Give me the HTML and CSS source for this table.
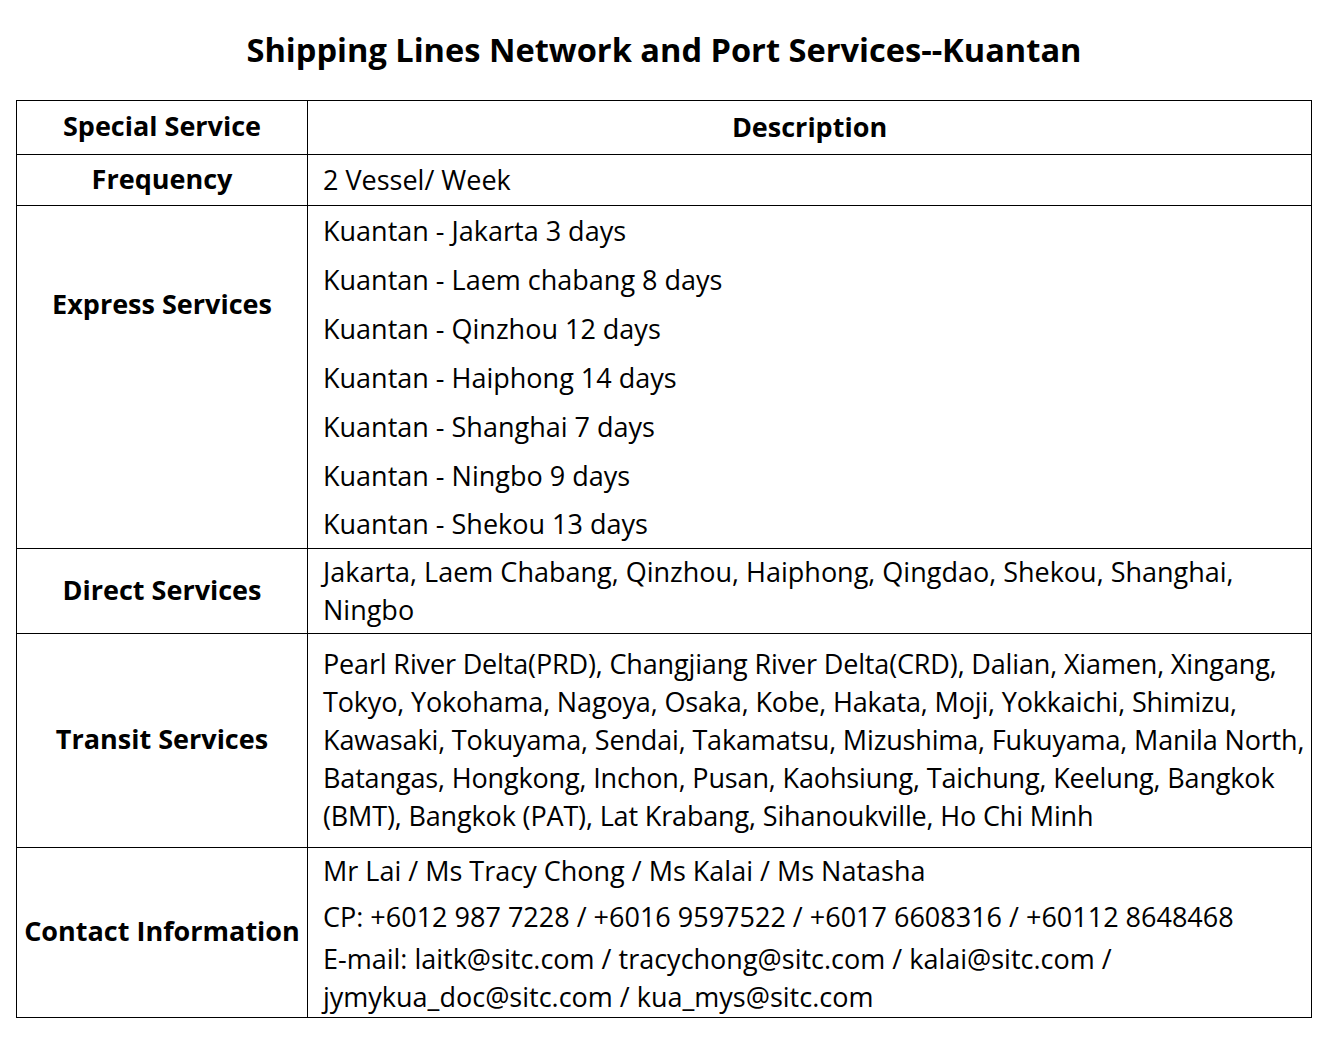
FILE: index.html
```html
<!DOCTYPE html>
<html>
<head>
<meta charset="utf-8">
<link rel="stylesheet" href="styles.css">
</head>
<body>
<h1 class="title">Shipping Lines Network and Port Services--Kuantan</h1>
<table class="grid">
  <tr class="row-head">
    <th class="label">Special Service</th>
    <th class="desc-head">Description</th>
  </tr>
  <tr class="row-freq">
    <th class="label">Frequency</th>
    <td class="desc">2 Vessel/ Week</td>
  </tr>
  <tr class="row-express">
    <th class="label label-express">Express Services</th>
    <td class="desc">
      <p class="line49">Kuantan - Jakarta 3 days</p>
      <p class="line49">Kuantan - Laem chabang 8 days</p>
      <p class="line49">Kuantan - Qinzhou 12 days</p>
      <p class="line49">Kuantan - Haiphong 14 days</p>
      <p class="line49">Kuantan - Shanghai 7 days</p>
      <p class="line49">Kuantan - Ningbo 9 days</p>
      <p class="line49">Kuantan - Shekou 13 days</p>
    </td>
  </tr>
  <tr class="row-direct">
    <th class="label">Direct Services</th>
    <td class="desc para">Jakarta, Laem Chabang, Qinzhou, Haiphong, Qingdao, Shekou, Shanghai, Ningbo</td>
  </tr>
  <tr class="row-transit">
    <th class="label">Transit Services</th>
    <td class="desc para">Pearl River Delta(PRD), Changjiang River Delta(CRD), Dalian, Xiamen, Xingang, Tokyo, Yokohama, Nagoya, Osaka, Kobe, Hakata, Moji, Yokkaichi, Shimizu, Kawasaki, Tokuyama, Sendai, Takamatsu, Mizushima, Fukuyama, Manila North, Batangas, Hongkong, Inchon, Pusan, Kaohsiung, Taichung, Keelung, Bangkok (BMT), Bangkok (PAT), Lat Krabang, Sihanoukville, Ho Chi Minh</td>
  </tr>
  <tr class="row-contact">
    <th class="label">Contact Information</th>
    <td class="desc">
      <p class="line46">Mr Lai / Ms Tracy Chong / Ms Kalai / Ms Natasha</p>
      <p class="line46">CP: +6012 987 7228 / +6016 9597522 / +6017 6608316 / +60112 8648468</p>
      <p class="para-p">E-mail: laitk@sitc.com / tracychong@sitc.com / kalai@sitc.com / jymykua_doc@sitc.com / kua_mys@sitc.com</p>
    </td>
  </tr>
</table>
</body>
</html>
```
FILE: styles.css
```css
html, body {
  margin: 0;
  padding: 0;
  background: #ffffff;
}
body {
  font-family: "Open Sans", "Noto Sans", sans-serif;
  color: #000;
  padding: 0 16px;
}
.title {
  margin: 0;
  padding-top: 28px;
  height: 100px;
  box-sizing: border-box;
  text-align: center;
  font-size: 32.6px;
  font-weight: 700;
  line-height: 44px;
}
.grid {
  width: 1296px;
  border-collapse: collapse;
  table-layout: fixed;
  font-size: 27px;
}
.grid th, .grid td {
  border: 1.5px solid #000;
  padding: 0;
}
.label {
  width: 290px;
  font-weight: 700;
  text-align: center;
  vertical-align: middle;
  padding-bottom: 4px !important;
}
.label-express {
  padding-bottom: 148px !important;
}
.desc-head {
  font-weight: 700;
  text-align: center;
  padding-bottom: 2px !important;
}
.desc {
  text-align: left;
  padding-left: 15px !important;
  padding-right: 2px !important;
  vertical-align: middle;
}
.row-head { height: 54px; }
.row-freq { height: 51px; }
.row-freq .desc { padding-bottom: 2px !important; }
.line49 {
  margin: 0;
  line-height: 49px;
}
.row-express .line49:last-child { line-height: 48px; }
.line46 {
  margin: 0;
  line-height: 46px;
}
.para {
  line-height: 38px;
}
.row-direct .para { padding-top: 4px !important; padding-bottom: 4px !important; }
.row-transit .para {
  padding-top: 11px !important;
  padding-bottom: 12px !important;
  letter-spacing: -0.15px;
}
.para-p {
  margin: 0;
  line-height: 38px;
}
.row-contact .desc { padding-bottom: 1px !important; }
```
